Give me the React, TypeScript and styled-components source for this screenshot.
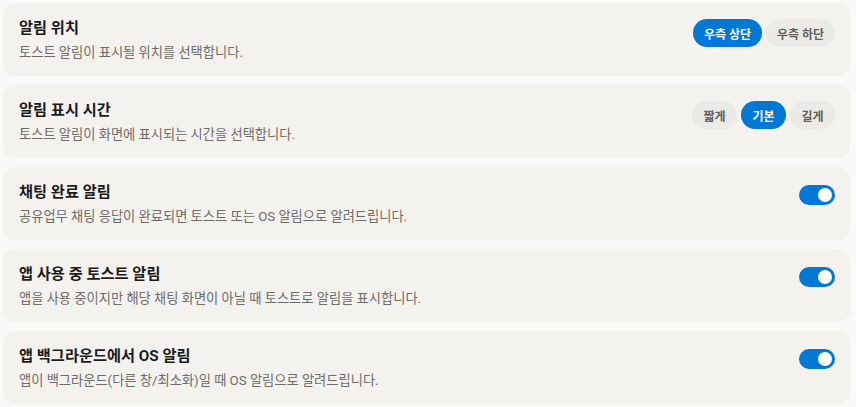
import React, { useState } from 'react';
import styled, { createGlobalStyle } from 'styled-components';

const GlobalStyle = createGlobalStyle`
  * { box-sizing: border-box; }
  body {
    margin: 0;
    background: #faf9f7;
    font-family: 'Segoe UI', Roboto, 'Noto Sans CJK KR', sans-serif;
  }
`;

const Page = styled.div`
  display: flex;
  flex-direction: column;
  gap: 9px;
  padding: 3px 6px 3px 3px;
`;

const Card = styled.section`
  display: flex;
  align-items: flex-start;
  justify-content: space-between;
  height: 73px;
  padding: 15px 15px 0 16px;
  background: #f3f2ef;
  border-radius: 12px;
`;

const Text = styled.div`
  display: flex;
  flex-direction: column;
  gap: 6px;
`;

const Title = styled.h3`
  margin: 0;
  font-size: 15.25px;
  font-weight: 700;
  line-height: 20px;
  color: #1b1b1b;
`;

const Desc = styled.p`
  margin: 0;
  font-size: 13.25px;
  line-height: 17px;
  color: #6f6c68;
`;

const Segment = styled.div`
  display: flex;
  gap: 4px;
  margin-top: 1px;
`;

const Pill = styled.button<{ $active: boolean; $w: number }>`
  width: ${(p) => p.$w}px;
  height: 28px;
  border: none;
  border-radius: 14px;
  font-family: inherit;
  font-size: 12px;
  font-weight: 700;
  cursor: pointer;
  background: ${(p) => (p.$active ? '#0078d4' : '#ebeae7')};
  color: ${(p) => (p.$active ? '#ffffff' : '#625f5b')};
`;

const Track = styled.button<{ $on: boolean }>`
  position: relative;
  width: 36px;
  height: 20px;
  margin-top: 3px;
  border: none;
  border-radius: 10px;
  padding: 0;
  cursor: pointer;
  background: ${(p) => (p.$on ? '#0078d4' : '#b8b5b0')};
`;

const Knob = styled.span<{ $on: boolean }>`
  position: absolute;
  top: 3px;
  left: ${(p) => (p.$on ? '19px' : '3px')};
  width: 14px;
  height: 14px;
  border-radius: 50%;
  background: #ffffff;
`;

const Toggle = () => {
  const [on, setOn] = useState(true);
  return (
    <Track $on={on} onClick={() => setOn(!on)}>
      <Knob $on={on} />
    </Track>
  );
};

const positions = ['우측 상단', '우측 하단'];
const durations = ['짧게', '기본', '길게'];

const toggles = [
  ['채팅 완료 알림', '공유업무 채팅 응답이 완료되면 토스트 또는 OS 알림으로 알려드립니다.'],
  ['앱 사용 중 토스트 알림', '앱을 사용 중이지만 해당 채팅 화면이 아닐 때 토스트로 알림을 표시합니다.'],
  ['앱 백그라운드에서 OS 알림', '앱이 백그라운드(다른 창/최소화)일 때 OS 알림으로 알려드립니다.'],
];

const App = (): JSX.Element => {
  const [pos, setPos] = useState('우측 상단');
  const [dur, setDur] = useState('기본');
  return (
    <>
      <GlobalStyle />
      <Page>
        <Card>
          <Text>
            <Title>알림 위치</Title>
            <Desc>토스트 알림이 표시될 위치를 선택합니다.</Desc>
          </Text>
          <Segment>
            {positions.map((p) => (
              <Pill key={p} $w={69} $active={pos === p} onClick={() => setPos(p)}>
                {p}
              </Pill>
            ))}
          </Segment>
        </Card>
        <Card>
          <Text>
            <Title>알림 표시 시간</Title>
            <Desc>토스트 알림이 화면에 표시되는 시간을 선택합니다.</Desc>
          </Text>
          <Segment>
            {durations.map((d) => (
              <Pill key={d} $w={45} $active={dur === d} onClick={() => setDur(d)}>
                {d}
              </Pill>
            ))}
          </Segment>
        </Card>
        {toggles.map(([t, d]) => (
          <Card key={t}>
            <Text>
              <Title>{t}</Title>
              <Desc>{d}</Desc>
            </Text>
            <Toggle />
          </Card>
        ))}
      </Page>
    </>
  );
};

export default App;
